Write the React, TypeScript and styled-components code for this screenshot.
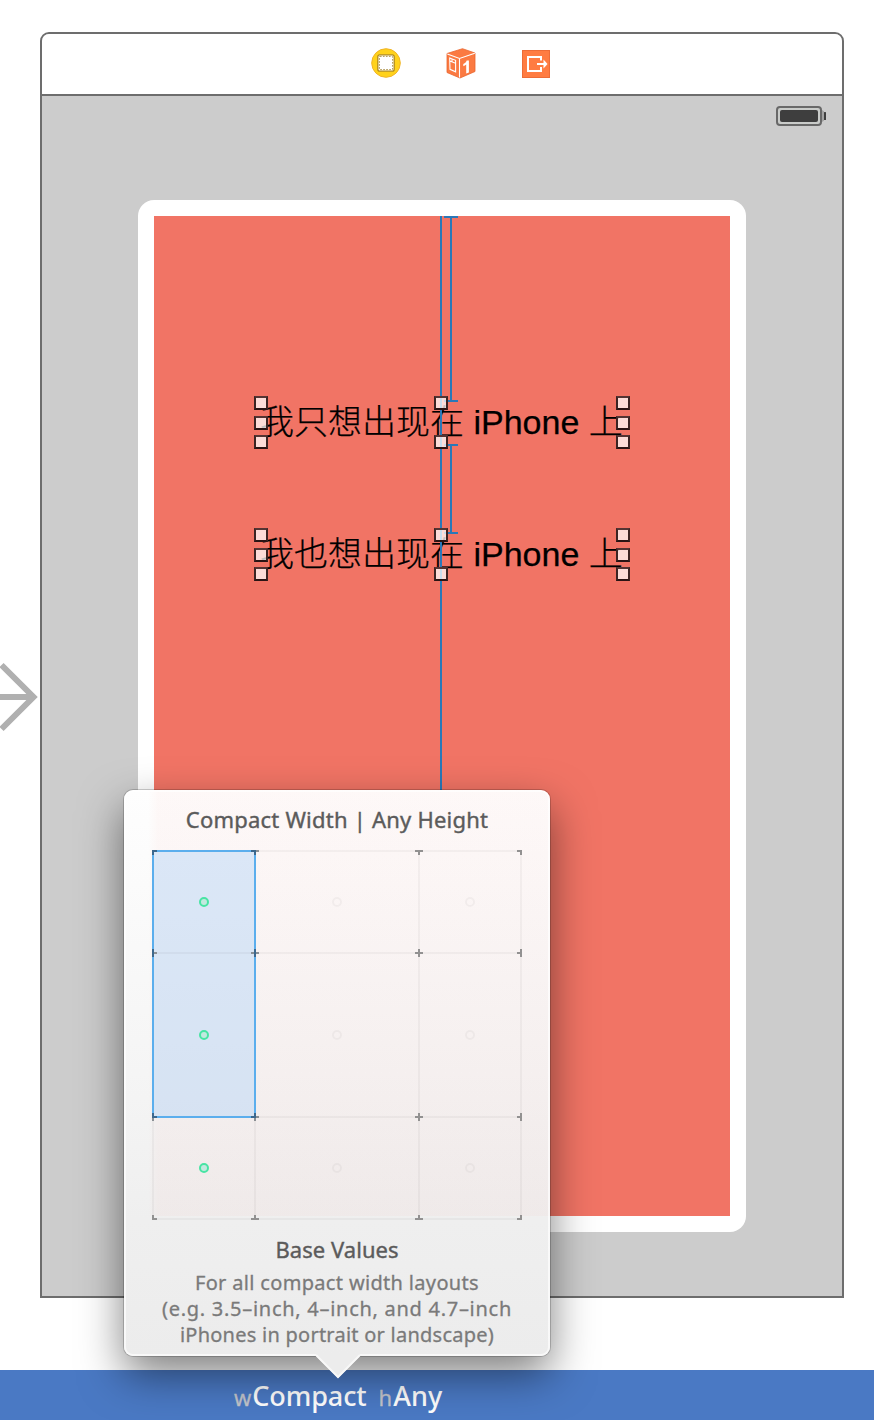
import React from 'react';
import styled, { createGlobalStyle } from 'styled-components';

const UI_FONT = '"Noto Sans", "Open Sans", sans-serif';
const LINE_BLUE = '#2a78b8';

const GlobalStyle = createGlobalStyle`
  *, *::before, *::after { box-sizing: border-box; }
  body { margin: 0; background: #fff; overflow: hidden; }
`;

const Page = styled.div`
  position: relative;
  display: flex;
  flex-direction: column;
  width: 874px;
  height: 1420px;
  overflow: hidden;
  background: #fff;
`;

const Canvas = styled.main`
  flex: 1;
  display: flex;
  align-items: flex-start;
  padding-top: 32px;
`;

const EntryArrow = styled.svg`
  flex: none;
  width: 40px;
  height: 70px;
  margin-top: 630px;
`;

const Scene = styled.section`
  display: flex;
  flex-direction: column;
  width: 804px;
  height: 1266px;
  border: 2px solid #6d6d6d;
  border-radius: 9px 9px 0 0;
  background: #ccc;
  overflow: hidden;
`;

const Dock = styled.header`
  display: flex;
  justify-content: center;
  align-items: center;
  gap: 43px;
  height: 62px;
  padding-left: 38px;
  border-bottom: 2px solid #6d6d6d;
  background: #fff;

  svg { display: block; width: 32px; height: 32px; }
`;

const StatusBar = styled.div`
  display: flex;
  justify-content: flex-end;
  height: 104px;
  padding: 10px 16px 0 0;
`;

const Device = styled.div`
  width: 608px;
  height: 1032px;
  margin-left: 96px;
  padding: 16px;
  border-radius: 16px;
  background: #fff;
`;

const DeviceScreen = styled.div`
  position: relative;
  display: flex;
  flex-direction: column;
  align-items: center;
  gap: 86px;
  height: 1000px;
  padding-top: 183px;
  background: #f17465;
`;

const Constraints = styled.svg`
  position: absolute;
  left: 0;
  top: 0;
  width: 576px;
  height: 1000px;
`;

const SelectedLabel = styled.div`
  position: relative;
  width: 364px;
  height: 46px;
  font: 300 34px/46px "Liberation Sans", "Noto Sans CJK SC", sans-serif;
  -webkit-text-stroke: 0.25px #000;
  color: #000;
  white-space: nowrap;
`;

const Handle = styled.i<{ $x: number; $y: number }>`
  position: absolute;
  z-index: 2;
  left: ${(p) => p.$x}px;
  top: ${(p) => p.$y}px;
  width: 14px;
  height: 14px;
  border: 2px solid #3a2020;
  border-color: #553534 #3c2423 #2a1414 #3c2423;
  background: rgba(255, 255, 255, 0.75);
  background-clip: padding-box;
`;

const SizeClassBar = styled.footer`
  display: flex;
  align-items: baseline;
  height: 50px;
  padding-left: 234px;
  background: #4a79c4;
  font-family: ${UI_FONT};
  line-height: 52px;
  white-space: pre;
`;

const Prefix = styled.span`
  margin-right: 1px;
  font-size: 22px;
  -webkit-text-stroke: 0.3px #c3c5cb;
  color: #c3c5cb;
`;

const SizeValue = styled.span<{ $spacing: number; $gap?: number }>`
  font-size: 27px;
  font-weight: 500;
  letter-spacing: ${(p) => p.$spacing}px;
  margin-right: ${(p) => p.$gap ?? 0}px;
  color: #fff;
`;

const Popover = styled.aside`
  position: absolute;
  z-index: 5;
  left: 124px;
  top: 790px;
  display: flex;
  flex-direction: column;
  align-items: center;
  width: 426px;
  height: 566px;
  border-radius: 9px;
  font-family: ${UI_FONT};
  background:
    linear-gradient(90deg, transparent 24px, rgba(255, 70, 55, 0.03) 34px) 0 0 / 100% 426px no-repeat,
    linear-gradient(180deg, #fefefe 0, #f5f5f5 50%, #efefef 76%, #ececec 100%);
  box-shadow:
    inset 0 0 0 2px rgba(255, 255, 255, 0.65),
    0 0 0 1px rgba(0, 0, 0, 0.18),
    0 18px 44px rgba(0, 0, 0, 0.5);
`;

const Pointer = styled.svg`
  position: absolute;
  left: 188px;
  top: 564px;
  width: 52px;
  height: 26px;
  overflow: visible;
`;

const Heading = styled.h2<{ $spacing: number }>`
  margin: 0;
  font-size: 22px;
  line-height: 30px;
  font-weight: 400;
  letter-spacing: ${(p) => p.$spacing}px;
  -webkit-text-stroke: 0.4px #5b5b5b;
  color: #5b5b5b;
  white-space: nowrap;
`;

const TitleHeading = styled(Heading)`
  margin-top: 14px;
`;

const Diagram = styled.svg`
  display: block;
  flex: none;
  width: 370px;
  height: 370px;
  margin: 16px 0 14px;
`;

const Description = styled.div`
  display: flex;
  flex-direction: column;
  align-items: center;
  margin-top: 6px;
`;

const DescriptionLine = styled.span<{ $spacing: number }>`
  font-size: 20px;
  line-height: 26px;
  letter-spacing: ${(p) => p.$spacing}px;
  -webkit-text-stroke: 0.3px #7a7a7a;
  color: #7a7a7a;
  white-space: nowrap;
`;

const HANDLES: [number, number][] = [0, 180, 362].flatMap((x) =>
  (x === 180 ? [0, 39] : [0, 20, 39]).map((y): [number, number] => [x - 6, y - 3]),
);

function CanvasLabel({ text }: { text: string }) {
  return (
    <SelectedLabel>
      {text}
      {HANDLES.map(([x, y]) => (
        <Handle key={`${x}.${y}`} $x={x} $y={y} />
      ))}
    </SelectedLabel>
  );
}

function ViewControllerIcon() {
  return (
    <svg viewBox="0 1 32 32">
      <circle cx="16" cy="16" r="14.3" fill="#ffd21b" stroke="#f0b429" />
      <rect x="7.8" y="7.8" width="16.4" height="16.4" rx="2" fill="#fff" stroke="#b28a18" strokeWidth="1.3" />
      <rect x="9.4" y="9.4" width="13.2" height="13.2" rx=".5" fill="#fff" stroke="#a68a3c" strokeWidth=".9" strokeDasharray="1.7 1.3" />
    </svg>
  );
}

function FirstResponderIcon() {
  return (
    <svg viewBox="0 1 32 32">
      <path d="M2 6.500 17.500 1.700 30 6v18.500L15 31 2 25.500Z" fill="#fb7a42" stroke="#e9662f" strokeWidth=".8" strokeLinejoin="round" />
      <path d="M2.300 7 14.500 11.500 29.800 6.200M14.500 11.500V30.500" fill="none" stroke="#fff" strokeWidth="1.1" />
      <path d="M4.700 11 10.600 13.300v11.500L5 22.300ZM4.800 14l5.800 2.200M7 12v2.600" fill="none" stroke="#fff" strokeWidth="1.1" />
      <path d="M18.300 17c2-.9 3-2.100 3.400-3.600h2.200v12l-2.700 1.100v-8.900c-.8.800-1.800 1.300-2.900 1.600Z" fill="#fff" />
    </svg>
  );
}

function ExitIcon() {
  return (
    <svg viewBox="0 0 32 32">
      <rect x="2.5" y="2.5" width="27" height="27" fill="#ff7c42" stroke="#ed6c37" />
      <path d="M21 12.500V9H8v14h13v-4" fill="none" stroke="#fff" strokeWidth="2" />
      <path d="M17 16H25" stroke="#fff" strokeWidth="2" />
      <path d="m23.500 11.500 4 4.500-4 4.500Z" fill="#fff" />
    </svg>
  );
}

function Battery() {
  return (
    <svg width="50" height="20" viewBox="0 0 50 20">
      <rect x="1" y="1" width="44" height="18" rx="3" fill="#c9cbc9" stroke="#686868" strokeWidth="2" />
      <rect x="4" y="4" width="38" height="12" rx="2" fill="#3e3e3e" />
      <path d="M46 4q2.500 1 2.500 3v6q0 2-2.500 3Z" fill="#a2a2a2" />
      <rect x="48" y="6" width="2" height="8" rx=".5" fill="#3e3e3e" />
    </svg>
  );
}

const STOPS = [1, 103, 267, 369];
const DOTS = [52, 185, 318];

function SizeClassGrid() {
  return (
    <Diagram viewBox="0 0 370 370">
      <rect x="1" y="1" width="102" height="266" fill="#bad8f8" fillOpacity=".5" />
      {STOPS.map((x) => (
        <path key={`v${x}`} d={`M${x} 0V370`} stroke="#000" strokeOpacity=".035" strokeWidth="2" />
      ))}
      {STOPS.map((y) => (
        <path key={`h${y}`} d={`M0 ${y}H370`} stroke="#000" strokeOpacity=".035" strokeWidth="2" />
      ))}
      <rect x="1" y="1" width="102" height="266" fill="none" stroke="#5baeed" strokeWidth="2" />
      {STOPS.map((x, i) =>
        STOPS.map((y, j) => {
          const left = i === 0 ? x - 1 : x - 4;
          const right = i === 3 ? x + 1 : x + 4;
          const top = j === 0 ? y - 1 : y - 4;
          const bottom = j === 3 ? y + 1 : y + 4;
          return (
            <path
              key={`${x}.${y}`}
              d={`M${left} ${y}H${right}M${x} ${top}V${bottom}`}
              stroke={i < 2 && j < 3 ? '#3c688e' : '#929191'}
              strokeWidth="2"
            />
          );
        }),
      )}
      <path d="M104 1h3M104 103h3M104 267h3M1 268v3M103 268v3M2 103h3M99 103h3" stroke="#8a8f94" strokeWidth="2" />
      {DOTS.map((x, i) =>
        DOTS.map((y) => (
          <circle
            key={`${x}.${y}`}
            cx={x}
            cy={y}
            r="4"
            fill={i === 0 ? '#c3e9df' : 'none'}
            stroke={i === 0 ? '#48e4a4' : '#000'}
            strokeOpacity={i === 0 ? 1 : 0.035}
            strokeWidth="2"
          />
        )),
      )}
    </Diagram>
  );
}

export default function App() {
  return (
    <Page>
      <GlobalStyle />
      <Canvas>
        <EntryArrow viewBox="0 0 40 70">
          <path d="M-2 35H34M1.500 3 33.500 35 1.500 67" fill="none" stroke="#b0b0b0" strokeWidth="6" />
        </EntryArrow>
        <Scene>
          <Dock>
            <ViewControllerIcon />
            <FirstResponderIcon />
            <ExitIcon />
          </Dock>
          <StatusBar>
            <Battery />
          </StatusBar>
          <Device>
            <DeviceScreen>
              <CanvasLabel text="我只想出现在 iPhone 上" />
              <CanvasLabel text="我也想出现在 iPhone 上" />
              <Constraints viewBox="0 0 576 1000">
                <path
                  d="M287 0V1000M290 1H304M297 0V186M290 185H304M290 229H304M297 228V318M290 317H304"
                  stroke={LINE_BLUE}
                  strokeWidth="2"
                />
              </Constraints>
            </DeviceScreen>
          </Device>
        </Scene>
      </Canvas>
      <SizeClassBar>
        <Prefix>w</Prefix>
        <SizeValue $spacing={-0.1} $gap={12}>Compact</SizeValue>
        <Prefix>h</Prefix>
        <SizeValue $spacing={0.1}>Any</SizeValue>
      </SizeClassBar>
      <Popover>
        <TitleHeading $spacing={0.22}>Compact Width | Any Height</TitleHeading>
        <SizeClassGrid />
        <Heading $spacing={0.05}>Base Values</Heading>
        <Description>
          <DescriptionLine $spacing={0.33}>For all compact width layouts</DescriptionLine>
          <DescriptionLine $spacing={0.72}>(e.g. 3.5–inch, 4–inch, and 4.7–inch</DescriptionLine>
          <DescriptionLine $spacing={0.25}>iPhones in portrait or landscape)</DescriptionLine>
        </Description>
        <Pointer viewBox="0 0 52 26">
          <path d="M4 0V2L26 24 48 2V0Z" fill="#ececec" />
          <path d="M4 1 26 23 48 1" fill="none" stroke="#f8f8f8" strokeWidth="2" />
        </Pointer>
      </Popover>
    </Page>
  );
}
